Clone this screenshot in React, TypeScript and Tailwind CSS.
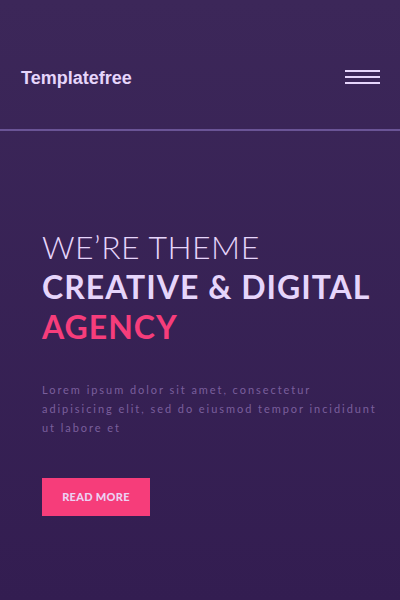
export default function App() {
  return (
    <div className="flex h-[600px] w-[400px] flex-col bg-gradient-to-b from-[#3c2759] to-[#331d51] font-['Lato',sans-serif]">
      <header className="flex h-[131px] items-center justify-between border-b-2 border-[#6a5496] pt-[24px] pr-[20px] pl-[21px]">
        <span className="mt-[4px] font-['Liberation_Sans',sans-serif] text-[18px] font-bold text-[#e6d5fb]">
          Templatefree
        </span>
        <button className="flex h-[14px] w-[35px] flex-col justify-between">
          <span className="h-[2px] w-full bg-[#e6d5fb]" />
          <span className="h-[2px] w-full bg-[#e6d5fb]" />
          <span className="h-[2px] w-full bg-[#e6d5fb]" />
        </button>
      </header>
      <main className="pt-[96px] pr-[20px] pl-[42px]">
        <h1 className="text-[32px] leading-[40px] text-[#e6d5fb]">
          <span className="block font-light tracking-[0.5px]">WE’RE THEME</span>
          <span className="block font-bold tracking-[1px]">CREATIVE &amp; DIGITAL</span>
          <span className="block font-bold tracking-[1px] text-[#f63d7b]">AGENCY</span>
        </h1>
        <p className="mt-[33px] text-[11px] leading-[19px] tracking-[1.95px] text-[#7a5f9c]">
          Lorem ipsum dolor sit amet, consectetur
          <br />
          adipisicing elit, sed do eiusmod tempor incididunt ut labore et
        </p>
        <button className="mt-[41px] h-[38px] w-[108px] bg-[#f63d7a] text-[11px] font-black tracking-[0.3px] text-[#ecd2f3]">
          READ MORE
        </button>
      </main>
    </div>
  );
}
